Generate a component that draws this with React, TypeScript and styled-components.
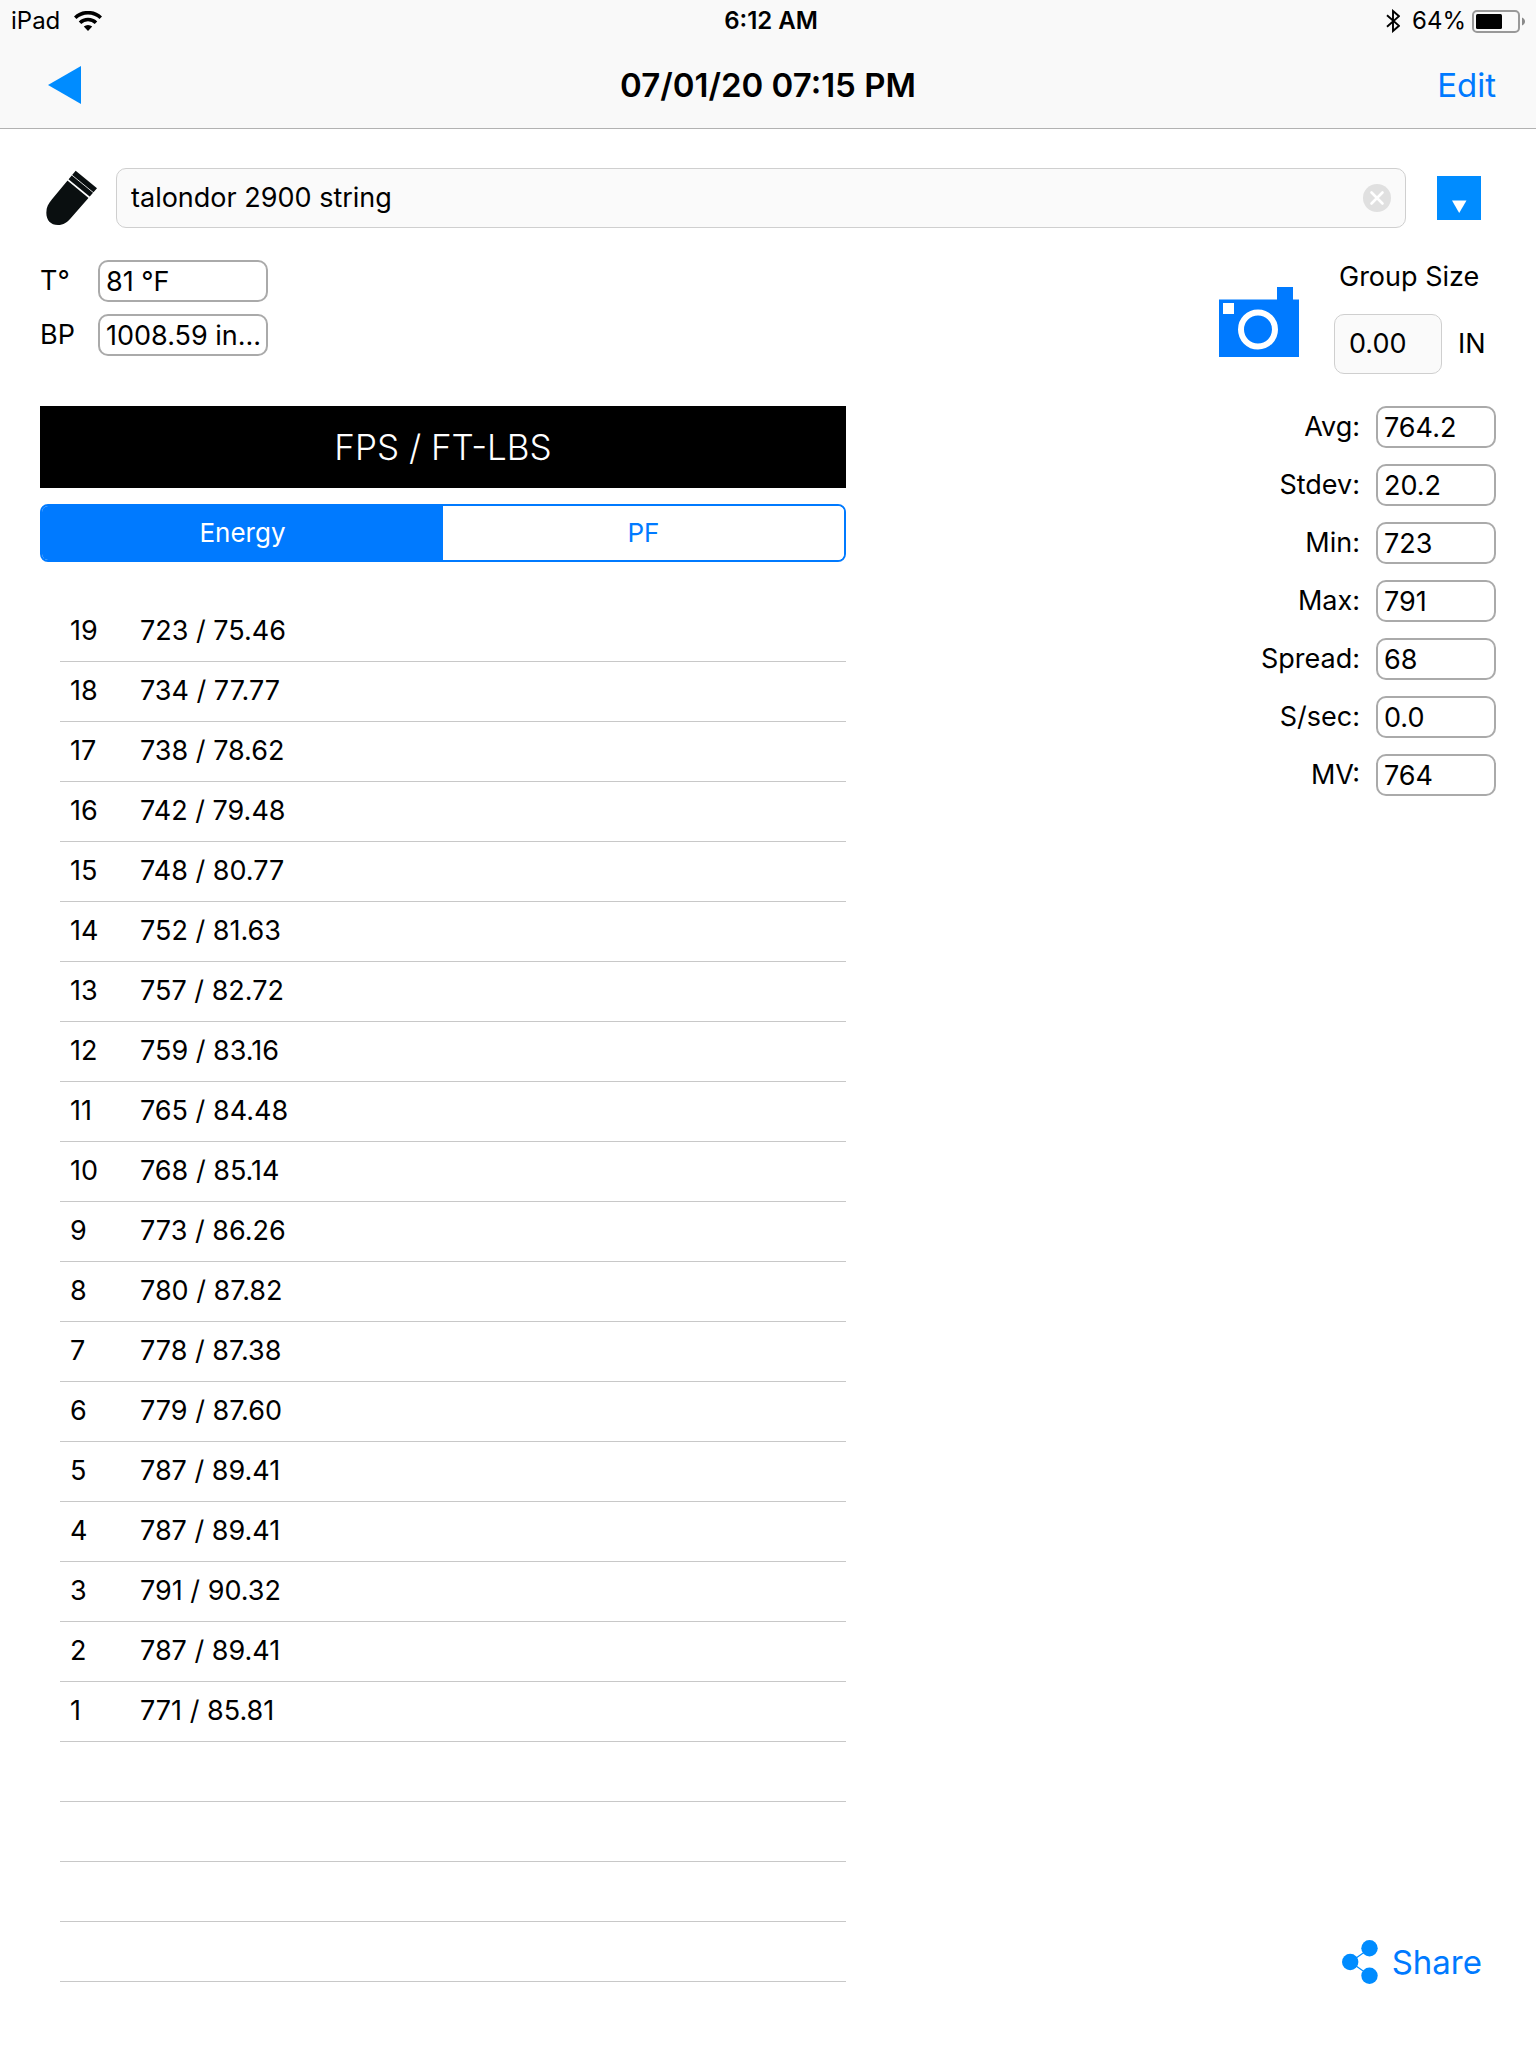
import React, { useState } from "react";
import styled, { createGlobalStyle } from "styled-components";

const BLUE = "#007aff";
const BRIGHT_BLUE = "#008cff";

const GlobalStyle = createGlobalStyle`
  *, *::before, *::after { box-sizing: border-box; }
  body {
    margin: 0;
    background: #fff;
    color: #000;
    font-family: Inter, Roboto, "Liberation Sans", sans-serif;
    font-size: 27px;
    line-height: 34px;
  }
  button, input { font: inherit; color: inherit; }
  button { border: 0; padding: 0; background: none; cursor: pointer; }
  svg { display: block; }
`;

const Screen = styled.div`
  display: flex;
  flex-direction: column;
  min-height: 100vh;
`;

const Header = styled.header`
  background: #f9f9f9;
  border-bottom: 1px solid #b2b2b2;
`;

const StatusBar = styled.div`
  display: grid;
  grid-template-columns: 1fr auto 1fr;
  align-items: center;
  height: 41px;
  padding: 1px 11px 0;
  font-size: 24px;
`;

const StatusGroup = styled.div<{ $end?: boolean }>`
  display: flex;
  align-items: center;
  gap: ${(p) => (p.$end ? 6 : 14)}px;
  justify-content: ${(p) => (p.$end ? "flex-end" : "flex-start")};
`;

const Battery = styled.span`
  display: flex;
  align-items: center;
  gap: 6px;
  padding-left: 6px;
`;

const Clock = styled.time`
  padding-left: 6px;
  font-weight: 600;
`;

const NavBar = styled.nav`
  display: grid;
  grid-template-columns: 1fr auto 1fr;
  align-items: center;
  height: 87px;
  padding: 0 40px;
`;

const Title = styled.h1`
  margin: 0;
  font-size: 33px;
  font-weight: 600;
`;

const BackButton = styled.button`
  justify-self: start;
  padding: 0 8px;
`;

const TextButton = styled.button`
  display: flex;
  align-items: center;
  justify-self: end;
  gap: 14px;
  font-size: 33px;
  color: ${BLUE};
`;

const Main = styled.main`
  flex: 1;
  display: flex;
  flex-direction: column;
  gap: 32px;
  padding: 39px 40px 64px;
`;

const LoadRow = styled.div`
  display: flex;
  align-items: center;
  padding: 0 15px 0 6px;
`;

const SoftField = styled.div<{ $width?: number }>`
  display: flex;
  align-items: center;
  height: 60px;
  padding: 0 14px;
  border: 1px solid #cfcfcf;
  border-radius: 10px;
  background: #fafafa;
  ${(p) => (p.$width ? `width: ${p.$width}px;` : "flex: 1; margin: 0 31px 0 18px;")}
`;

const BareInput = styled.input`
  flex: 1;
  min-width: 0;
  padding: 0;
  border: 0;
  outline: 0;
  background: none;
`;

const Conditions = styled.div`
  display: flex;
  justify-content: space-between;
`;

const ConditionList = styled.div`
  display: grid;
  grid-template-columns: 58px 170px;
  grid-auto-rows: 42px;
  gap: 12px 0;
  align-items: center;
  align-content: start;
`;

const ValueBox = styled.input`
  width: 100%;
  height: 42px;
  padding: 0 0 0 6px;
  border: 2px solid #aaa;
  border-radius: 10px;
  background: #fff;
`;

const GroupArea = styled.div`
  display: flex;
  align-items: flex-end;
  gap: 35px;
`;

const CameraButton = styled.button`
  margin-bottom: 17px;
`;

const GroupSize = styled.div`
  display: flex;
  flex-direction: column;
  gap: 20px;
  width: 162px;
`;

const GroupLabel = styled.label`
  padding-left: 5px;
  white-space: nowrap;
`;

const GroupEntry = styled.div`
  display: flex;
  align-items: center;
  gap: 16px;
`;

const Columns = styled.div`
  flex: 1;
  display: grid;
  grid-template-columns: minmax(0, 31fr) minmax(0, 25fr);
`;

const Banner = styled.h2`
  margin: 0 0 16px;
  padding: 20px 0;
  background: #000;
  color: #fff;
  font-size: 35px;
  font-weight: 300;
  line-height: 42px;
  text-align: center;
`;

const Segments = styled.div`
  display: flex;
  height: 58px;
  border: 2px solid ${BLUE};
  border-radius: 8px;
  overflow: hidden;
`;

const Segment = styled.button<{ $on: boolean }>`
  flex: 1;
  font-size: 26px;
  background: ${(p) => (p.$on ? BLUE : "#fff")};
  color: ${(p) => (p.$on ? "#fff" : BLUE)};
`;

const ShotTable = styled.table`
  width: calc(100% - 20px);
  margin: 39px 0 0 20px;
  border-collapse: collapse;
  table-layout: fixed;
`;

const ShotRow = styled.tr`
  height: 60px;
  border-bottom: 1px solid #c8c8c8;
`;

const ShotNumber = styled.th`
  width: 80px;
  padding: 0 0 0 10px;
  font-weight: 400;
  text-align: left;
`;

const ShotValue = styled.td`
  padding: 0;
`;

const Side = styled.aside`
  display: flex;
  flex-direction: column;
  justify-content: space-between;
  align-items: flex-end;
`;

const Stats = styled.div`
  display: grid;
  grid-template-columns: auto 120px;
  grid-auto-rows: 42px;
  gap: 16px;
  align-items: center;
  justify-items: end;
`;

const ShareSlot = styled.div`
  padding-right: 14px;
`;

const shots: [number, string][] = [
  [19, "723 / 75.46"],
  [18, "734 / 77.77"],
  [17, "738 / 78.62"],
  [16, "742 / 79.48"],
  [15, "748 / 80.77"],
  [14, "752 / 81.63"],
  [13, "757 / 82.72"],
  [12, "759 / 83.16"],
  [11, "765 / 84.48"],
  [10, "768 / 85.14"],
  [9, "773 / 86.26"],
  [8, "780 / 87.82"],
  [7, "778 / 87.38"],
  [6, "779 / 87.60"],
  [5, "787 / 89.41"],
  [4, "787 / 89.41"],
  [3, "791 / 90.32"],
  [2, "787 / 89.41"],
  [1, "771 / 85.81"],
];

const EMPTY_ROWS = 4;

const stats = [
  ["Avg:", "764.2"],
  ["Stdev:", "20.2"],
  ["Min:", "723"],
  ["Max:", "791"],
  ["Spread:", "68"],
  ["S/sec:", "0.0"],
  ["MV:", "764"],
];

const WifiIcon = () => (
  <svg width="28" height="20" viewBox="0 0 28 20" aria-hidden="true">
    <g fill="none" stroke="#000" strokeWidth="3.6">
      <path d="M1.200 6.800a18.500 18.500 0 0 1 25.600 0" />
      <path d="M6 11.800a11.500 11.500 0 0 1 16 0" />
    </g>
    <path d="M14 20l-4.200-4.400a6 6 0 0 1 8.400 0z" />
  </svg>
);

const BluetoothIcon = () => (
  <svg width="14" height="24" viewBox="0 0 14 24" aria-hidden="true">
    <path d="M1 6.200l12 10.600-6 5.200V2l6 5.200L1 17.800" fill="none" stroke="#000" strokeWidth="1.9" />
  </svg>
);

const BatteryIcon = () => (
  <svg width="53" height="23" viewBox="0 0 53 23" aria-hidden="true">
    <rect x="1" y="1" width="46" height="21" rx="4" fill="none" stroke="#999" strokeWidth="2" />
    <rect x="4" y="4" width="26" height="15" rx="1.5" />
    <path d="M50 7.500c4 1.500 4 6.500 0 8z" fill="#8a8a8a" />
  </svg>
);

const BackIcon = () => (
  <svg width="33" height="38" viewBox="0 0 33 38" aria-hidden="true">
    <path d="M0 19L33 0v38z" fill={BRIGHT_BLUE} />
  </svg>
);

const BulletIcon = () => (
  <svg width="52" height="56" viewBox="138 510 156 168" aria-hidden="true">
    <path
      d="M227 512L291 565L216 650C202 667 190 675 174 675C152 675 139 660 139 638C139 622 145 611 156 598Z"
      fill="#0a0f10"
    />
    <path d="M214 524L284 581" stroke="#fff" strokeWidth="2.5" />
    <path d="M202 538L270 594" stroke="#fff" strokeWidth="5" />
  </svg>
);

const ClearIcon = () => (
  <svg width="28" height="28" viewBox="0 0 28 28" aria-hidden="true">
    <circle cx="14" cy="14" r="14" fill="#e0e0e0" />
    <path d="M8.500 8.500l11 11M19.500 8.500l-11 11" stroke="#fff" strokeWidth="2.6" strokeLinecap="round" />
  </svg>
);

const DropIcon = () => (
  <svg width="44" height="44" viewBox="0 0 44 44" aria-hidden="true">
    <path d="M0 0h44v44H0z" fill={BRIGHT_BLUE} />
    <path d="M15 24.500h14.500L22.200 37z" fill="#fff" />
  </svg>
);

const CameraIcon = () => (
  <svg width="81" height="70" viewBox="0 0 81 70" aria-hidden="true">
    <path d="M1 12.500h58V0h16v12.500h6V70H1z" fill={BLUE} />
    <path d="M5 16h11v11H5z" fill="#fff" />
    <circle cx="40" cy="42.500" r="17" fill="none" stroke="#fff" strokeWidth="6" />
  </svg>
);

const ShareIcon = () => (
  <svg width="36" height="44" viewBox="0 0 36 44" aria-hidden="true">
    <path d="M27.500 8.500L8.500 22l19 13.500" fill="none" stroke={BRIGHT_BLUE} strokeWidth="1.2" />
    <g fill={BRIGHT_BLUE}>
      <circle cx="27.500" cy="8.200" r="8.200" />
      <circle cx="8.200" cy="22" r="8.200" />
      <circle cx="27.500" cy="35.700" r="8.200" />
    </g>
  </svg>
);

export default function App() {
  const [mode, setMode] = useState("Energy");
  const [load, setLoad] = useState("talondor 2900 string");
  const [group, setGroup] = useState("0.00");

  return (
    <Screen>
      <GlobalStyle />
      <Header>
        <StatusBar>
          <StatusGroup>
            <span>iPad</span>
            <WifiIcon />
          </StatusGroup>
          <Clock>6:12 AM</Clock>
          <StatusGroup $end>
            <BluetoothIcon />
            <Battery>
              64%
              <BatteryIcon />
            </Battery>
          </StatusGroup>
        </StatusBar>
        <NavBar>
          <BackButton aria-label="Back">
            <BackIcon />
          </BackButton>
          <Title>07/01/20 07:15 PM</Title>
          <TextButton>Edit</TextButton>
        </NavBar>
      </Header>

      <Main>
        <LoadRow>
          <BulletIcon />
          <SoftField>
            <BareInput aria-label="Load name" value={load} onChange={(e) => setLoad(e.target.value)} />
            <button aria-label="Clear" onClick={() => setLoad("")}>
              <ClearIcon />
            </button>
          </SoftField>
          <button aria-label="Choose load">
            <DropIcon />
          </button>
        </LoadRow>

        <Conditions>
          <ConditionList>
            <label htmlFor="temperature">T°</label>
            <ValueBox id="temperature" readOnly value="81 °F" />
            <label htmlFor="pressure">BP</label>
            <ValueBox id="pressure" readOnly value="1008.59 in..." />
          </ConditionList>
          <GroupArea>
            <CameraButton aria-label="Take photo">
              <CameraIcon />
            </CameraButton>
            <GroupSize>
              <GroupLabel htmlFor="group-size">Group Size</GroupLabel>
              <GroupEntry>
                <SoftField $width={108}>
                  <BareInput id="group-size" value={group} onChange={(e) => setGroup(e.target.value)} />
                </SoftField>
                <span>IN</span>
              </GroupEntry>
            </GroupSize>
          </GroupArea>
        </Conditions>

        <Columns>
          <section>
            <Banner>FPS / FT-LBS</Banner>
            <Segments role="group" aria-label="Display mode">
              {["Energy", "PF"].map((name) => (
                <Segment key={name} $on={mode === name} aria-pressed={mode === name} onClick={() => setMode(name)}>
                  {name}
                </Segment>
              ))}
            </Segments>
            <ShotTable>
              <tbody>
                {shots.map(([number, value]) => (
                  <ShotRow key={number}>
                    <ShotNumber scope="row">{number}</ShotNumber>
                    <ShotValue>{value}</ShotValue>
                  </ShotRow>
                ))}
                {Array.from({ length: EMPTY_ROWS }, (_, i) => (
                  <ShotRow key={`empty-${i}`}>
                    <ShotValue colSpan={2} />
                  </ShotRow>
                ))}
              </tbody>
            </ShotTable>
          </section>

          <Side>
            <Stats>
              {stats.map(([label, value]) => (
                <React.Fragment key={label}>
                  <label htmlFor={label}>{label}</label>
                  <ValueBox id={label} readOnly value={value} />
                </React.Fragment>
              ))}
            </Stats>
            <ShareSlot>
              <TextButton>
                <ShareIcon />
                Share
              </TextButton>
            </ShareSlot>
          </Side>
        </Columns>
      </Main>
    </Screen>
  );
}
